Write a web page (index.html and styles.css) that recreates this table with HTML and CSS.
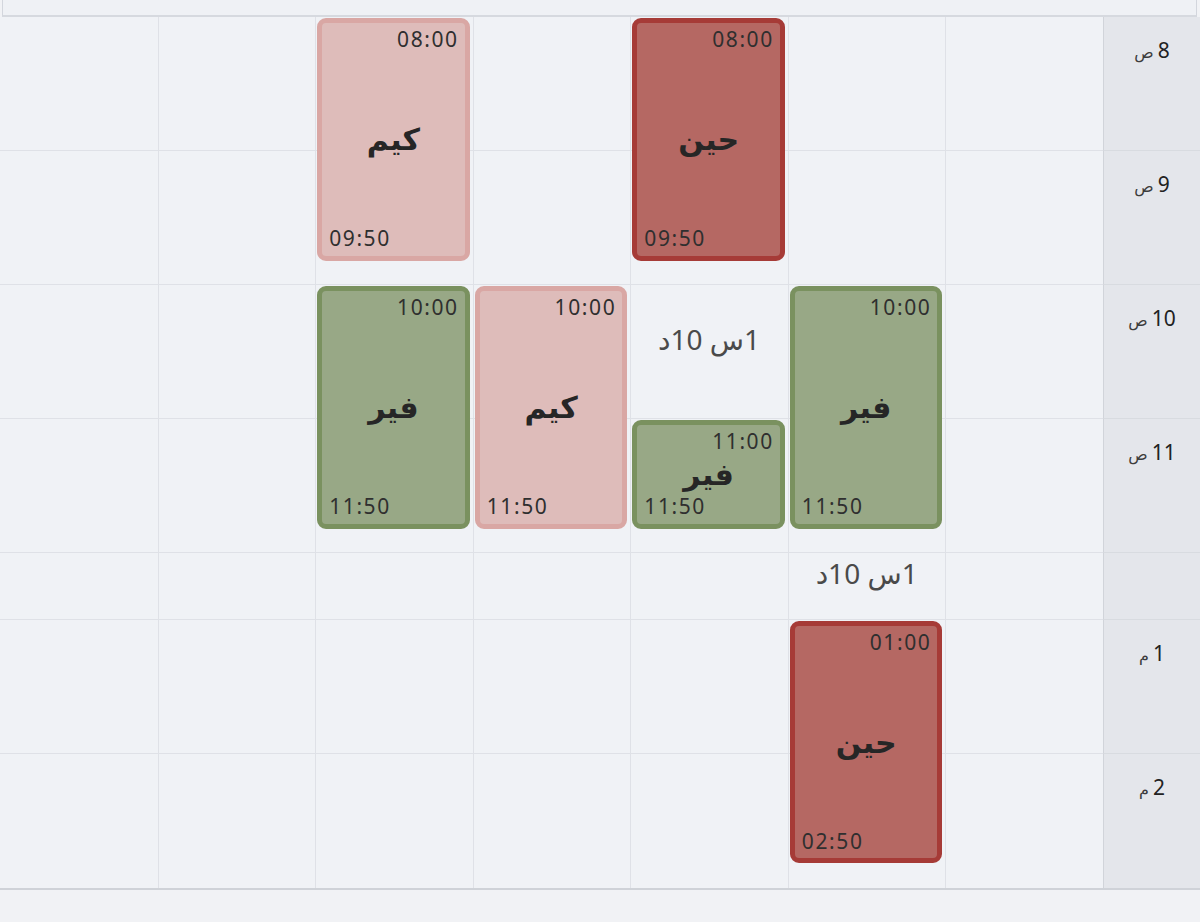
FILE: index.html
```html
<!DOCTYPE html>
<html lang="ar" dir="rtl">
<head>
<meta charset="utf-8">
<title>الجدول</title>
<link rel="stylesheet" href="styles.css">
</head>
<body>
<div class="top-bar"></div>
<div class="calendar">
  <!-- hour 8 -->
  <div class="hour-label" style="grid-row: 1 / span 6"><span class="num">8</span> <span class="ampm">ص</span></div>
  <div class="cell" style="grid-row: 1 / span 6; grid-column: 2"></div>
  <div class="cell" style="grid-row: 1 / span 6; grid-column: 3"></div>
  <div class="cell" style="grid-row: 1 / span 6; grid-column: 4"></div>
  <div class="cell" style="grid-row: 1 / span 6; grid-column: 5"></div>
  <div class="cell" style="grid-row: 1 / span 6; grid-column: 6"></div>
  <div class="cell" style="grid-row: 1 / span 6; grid-column: 7"></div>
  <div class="cell last" style="grid-row: 1 / span 6; grid-column: 8"></div>
  <!-- hour 9 -->
  <div class="hour-label" style="grid-row: 7 / span 6"><span class="num">9</span> <span class="ampm">ص</span></div>
  <div class="cell" style="grid-row: 7 / span 6; grid-column: 2"></div>
  <div class="cell" style="grid-row: 7 / span 6; grid-column: 3"></div>
  <div class="cell" style="grid-row: 7 / span 6; grid-column: 4"></div>
  <div class="cell" style="grid-row: 7 / span 6; grid-column: 5"></div>
  <div class="cell" style="grid-row: 7 / span 6; grid-column: 6"></div>
  <div class="cell" style="grid-row: 7 / span 6; grid-column: 7"></div>
  <div class="cell last" style="grid-row: 7 / span 6; grid-column: 8"></div>
  <!-- hour 10 -->
  <div class="hour-label" style="grid-row: 13 / span 6"><span class="num">10</span> <span class="ampm">ص</span></div>
  <div class="cell" style="grid-row: 13 / span 6; grid-column: 2"></div>
  <div class="cell" style="grid-row: 13 / span 6; grid-column: 3"></div>
  <div class="cell" style="grid-row: 13 / span 6; grid-column: 4"></div>
  <div class="cell" style="grid-row: 13 / span 6; grid-column: 5"></div>
  <div class="cell" style="grid-row: 13 / span 6; grid-column: 6"></div>
  <div class="cell" style="grid-row: 13 / span 6; grid-column: 7"></div>
  <div class="cell last" style="grid-row: 13 / span 6; grid-column: 8"></div>
  <!-- hour 11 -->
  <div class="hour-label" style="grid-row: 19 / span 6"><span class="num">11</span> <span class="ampm">ص</span></div>
  <div class="cell" style="grid-row: 19 / span 6; grid-column: 2"></div>
  <div class="cell" style="grid-row: 19 / span 6; grid-column: 3"></div>
  <div class="cell" style="grid-row: 19 / span 6; grid-column: 4"></div>
  <div class="cell" style="grid-row: 19 / span 6; grid-column: 5"></div>
  <div class="cell" style="grid-row: 19 / span 6; grid-column: 6"></div>
  <div class="cell" style="grid-row: 19 / span 6; grid-column: 7"></div>
  <div class="cell last" style="grid-row: 19 / span 6; grid-column: 8"></div>
  <!-- collapsed gap -->
  <div class="hour-label" style="grid-row: 25 / span 3"></div>
  <div class="cell" style="grid-row: 25 / span 3; grid-column: 2"></div>
  <div class="cell" style="grid-row: 25 / span 3; grid-column: 3"></div>
  <div class="cell" style="grid-row: 25 / span 3; grid-column: 4"></div>
  <div class="cell" style="grid-row: 25 / span 3; grid-column: 5"></div>
  <div class="cell" style="grid-row: 25 / span 3; grid-column: 6"></div>
  <div class="cell" style="grid-row: 25 / span 3; grid-column: 7"></div>
  <div class="cell last" style="grid-row: 25 / span 3; grid-column: 8"></div>
  <!-- hour 1 -->
  <div class="hour-label" style="grid-row: 28 / span 6"><span class="num">1</span> <span class="ampm">م</span></div>
  <div class="cell" style="grid-row: 28 / span 6; grid-column: 2"></div>
  <div class="cell" style="grid-row: 28 / span 6; grid-column: 3"></div>
  <div class="cell" style="grid-row: 28 / span 6; grid-column: 4"></div>
  <div class="cell" style="grid-row: 28 / span 6; grid-column: 5"></div>
  <div class="cell" style="grid-row: 28 / span 6; grid-column: 6"></div>
  <div class="cell" style="grid-row: 28 / span 6; grid-column: 7"></div>
  <div class="cell last" style="grid-row: 28 / span 6; grid-column: 8"></div>
  <!-- hour 2 -->
  <div class="hour-label bottom" style="grid-row: 34 / span 6"><span class="num">2</span> <span class="ampm">م</span></div>
  <div class="cell bottom" style="grid-row: 34 / span 6; grid-column: 2"></div>
  <div class="cell bottom" style="grid-row: 34 / span 6; grid-column: 3"></div>
  <div class="cell bottom" style="grid-row: 34 / span 6; grid-column: 4"></div>
  <div class="cell bottom" style="grid-row: 34 / span 6; grid-column: 5"></div>
  <div class="cell bottom" style="grid-row: 34 / span 6; grid-column: 6"></div>
  <div class="cell bottom" style="grid-row: 34 / span 6; grid-column: 7"></div>
  <div class="cell bottom last" style="grid-row: 34 / span 6; grid-column: 8"></div>

  <!-- events -->
  <div class="event pink" style="grid-column: 6; grid-row: 1 / span 11">
    <span class="ev-start">08:00</span><span class="ev-name">كيم</span><span class="ev-end">09:50</span>
  </div>
  <div class="event red" style="grid-column: 4; grid-row: 1 / span 11">
    <span class="ev-start">08:00</span><span class="ev-name">حين</span><span class="ev-end">09:50</span>
  </div>
  <div class="event green" style="grid-column: 6; grid-row: 13 / span 11">
    <span class="ev-start">10:00</span><span class="ev-name">فير</span><span class="ev-end">11:50</span>
  </div>
  <div class="event pink" style="grid-column: 5; grid-row: 13 / span 11">
    <span class="ev-start">10:00</span><span class="ev-name">كيم</span><span class="ev-end">11:50</span>
  </div>
  <div class="gap" style="grid-column: 4; grid-row: 12 / span 7">1س 10د</div>
  <div class="event green compact" style="grid-column: 4; grid-row: 19 / span 5">
    <span class="ev-start">11:00</span><span class="ev-name">فير</span><span class="ev-end">11:50</span>
  </div>
  <div class="event green" style="grid-column: 3; grid-row: 13 / span 11">
    <span class="ev-start">10:00</span><span class="ev-name">فير</span><span class="ev-end">11:50</span>
  </div>
  <div class="gap" style="grid-column: 3; grid-row: 24 / span 4">1س 10د</div>
  <div class="event red" style="grid-column: 3; grid-row: 28 / span 11">
    <span class="ev-start">01:00</span><span class="ev-name">حين</span><span class="ev-end">02:50</span>
  </div>
</div>
</body>
</html>
```

FILE: styles.css
```css
* { box-sizing: border-box; }

html, body {
  margin: 0;
  padding: 0;
}

body {
  background: #f1f2f5;
  font-family: "Noto Sans", "DejaVu Sans", sans-serif;
  color: #262626;
  width: 1200px;
  height: 922px;
  overflow: hidden;
}

.top-bar {
  height: 17px;
  margin: 0 3px 0 2px;
  background: #eff1f5;
  border-left: 1px solid #d3d6dd;
  border-right: 1px solid #d3d6dd;
  border-bottom: 2px solid #d6d9df;
}

.calendar {
  display: grid;
  direction: rtl;
  grid-template-columns: 97px repeat(7, 1fr);
  grid-template-rows: repeat(39, 22.333px);
  background: #f0f2f6;
  border-bottom: 2px solid #cfd2d8;
}

.cell {
  border-left: 1px solid #dfe1e7;
  border-bottom: 1px solid #dfe1e7;
}

.cell.last {
  border-left: none;
}

.cell.bottom,
.hour-label.bottom {
  border-bottom: none;
}

.hour-label {
  grid-column: 1;
  background: #e4e6eb;
  border-left: 1px solid #d1d4da;
  border-bottom: 1px solid #d8dbe0;
  text-align: center;
  padding-top: 21px;
  color: #222;
  line-height: 1.2;
}

.hour-label .num {
  font-size: 21px;
}

.hour-label .ampm {
  font-size: 16px;
  color: #3c3c3c;
}

.event {
  margin: 1px 3px 2px 2px;
  border: 5px solid;
  border-radius: 9px;
  padding: 4px 7px 4px 7px;
  display: flex;
  flex-direction: column;
  min-height: 0;
  overflow: hidden;
  line-height: 1.2;
}

.event .ev-start,
.event .ev-end {
  font-size: 21px;
  letter-spacing: 1.6px;
  color: #2f2f2f;
  direction: ltr;
}

.event .ev-start {
  text-align: right;
  margin-right: -1px;
}

.event .ev-end {
  text-align: left;
}

.event .ev-name {
  flex: 1;
  min-height: 0;
  display: flex;
  align-items: center;
  justify-content: center;
  font-size: 30px;
  font-weight: bold;
  line-height: 1;
  color: #262626;
}

.event.pink {
  background: #debcba;
  border-color: #d9a7a4;
}

.event.red {
  background: #b56863;
  border-color: #a63b37;
}

.event.green {
  background: #98a886;
  border-color: #7a915f;
}

.gap {
  display: flex;
  align-items: center;
  justify-content: center;
  font-size: 28px;
  color: #4a4a4a;
  margin-top: -4px;
}
```
